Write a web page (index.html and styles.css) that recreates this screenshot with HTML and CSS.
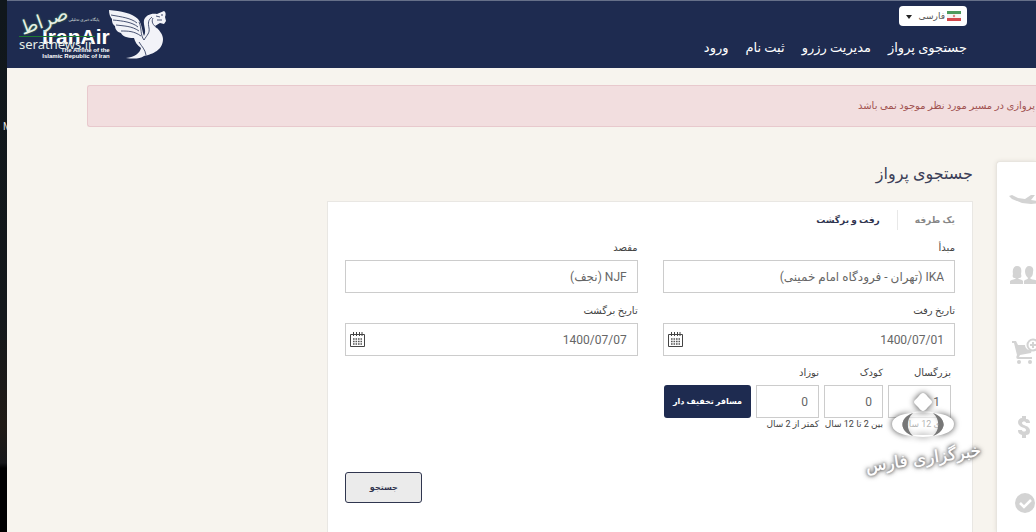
FILE: index.html
```html
<!DOCTYPE html>
<html lang="fa" dir="rtl">
<head>
<meta charset="utf-8">
<title>جستجوی پرواز</title>
<link rel="stylesheet" href="styles.css">
</head>
<body>
<div class="app">
  <header class="header">
    <div class="header-menu">
      <div class="language">
        <svg class="flag" viewBox="0 0 14 10"><path fill="#4d9a5c" d="M0 0h14v3H0z"/><path fill="#f5f5f2" d="M0 3h14v4H0z"/><path fill="#d3484b" d="M0 7h14v3H0z"/><circle cx="7" cy="5" r="1.2" fill="#d98a80"/></svg>
        <select class="language-select" aria-label="زبان"><option>فارسی</option></select>
        <svg class="caret" viewBox="0 0 6 4"><path d="M0 0h6L3 4z" fill="#222"/></svg>
      </div>
      <nav class="nav">
        <a href="#">جستجوی پرواز</a>
        <a href="#">مدیریت رزرو</a>
        <a href="#">ثبت نام</a>
        <a href="#">ورود</a>
      </nav>
    </div>
    <div class="brand" dir="ltr">
      <div class="brand-text">
        <strong class="brand-name">IranAir</strong>
        <span>The Airline of the</span>
        <span>Islamic Republic of Iran</span>
      </div>
      <svg class="homa" viewBox="0 0 58 50">
        <path fill="#f2f3f8" d="M0 0C12 1 23 3 29 9C33 14 33 21 35 26C38 21 34 15 35 10C37 5 42 3 48 4L55 1C57 2 57 5 56 7L57 11L55 14L51 13L46 16C50 20 54 24 54 29C54 40 44 44 35 46C31 49 24 49 17 48C26 47 31 43 32 38C28 35 26 32 25 28C18 28 13 26 12 23C8 22 6 19 6 16C3 14 3 11 3 9C1 7 0 4 0 0Z"/>
        <g fill="none" stroke="#1e2b50" stroke-width=".8"><path d="M2 5C13 7 22 8 28 13M4 10C14 11 23 12 29 17M7 15C15 16 23 16 30 21M12 21C19 21 25 21 32 26M30 12C33 18 31 25 35 30C38 25 41 23 40 18C39 13 39 10 43 7"/><path d="M37 45C36 39 33 37 30 32M44 8C42 12 44 15 48 18M47 6L51 7M48 10L53 10"/></g>
        <circle cx="53" cy="5" r=".8" fill="#1e2b50"/>
      </svg>
    </div>
  </header>

  <div class="alert" role="alert">پروازی در مسیر مورد نظر موجود نمی باشد</div>

  <main class="layout">
    <aside class="steps">
      <svg class="step" viewBox="0 0 30 30"><path d="M0 11L3 10L9 13L16 14L22 10L26 10L22 15L30 16V18L22 19L13 18L3 14Z"/></svg>
      <svg class="step" viewBox="0 0 30 30"><path d="M1 23V20C3 18 6 19 7 17C4 17 3 16 4 13C3 8 5 5 8 5C12 5 13 8 12 13C13 16 12 17 9 17C10 19 13 18 14 20V23ZM15 23V20C16 18 19 19 19 17C17 15 16 13 16 10C16 7 18 5 20 5C23 5 25 7 24 11C24 14 23 16 21 17C22 19 26 18 28 20V23Z"/></svg>
      <svg class="step" viewBox="0 0 30 30"><path d="M3 4H7L9 8H16C16 11 19 14 23 13L22 16L11 18L10 20H23V22H9C7 22 7 20 8 18L5 6H3Z"/><circle cx="10" cy="25" r="2"/><circle cx="21" cy="25" r="2"/><circle cx="24" cy="8" r="5.500" fill="none" stroke="#d3d3d3" stroke-width="2"/><path d="M23 5h2v2h2v2h-2v2h-2V9h-2V7h2z"/></svg>
      <svg class="step" viewBox="0 0 30 30"><path d="M13 3h4v3c3 0 4 2 4 4h-4c0-2-4-2-4 0 0 3 8 2 8 8 0 3-2 4-4 4v3h-4v-3c-3-1-4-2-4-5h4c0 2 4 2 4 0 0-3-8-2-8-8 0-2 2-4 4-4z"/></svg>
      <svg class="step" viewBox="0 0 30 30"><circle cx="16" cy="14" r="10"/><path d="M11 14l4 4 7-7" fill="none" stroke="#fff" stroke-width="2.500"/></svg>
    </aside>

    <section class="search">
      <h1 class="title">جستجوی پرواز</h1>
      <form class="card">
        <div class="tabs">
          <button type="button" class="tab">یک طرفه</button>
          <button type="button" class="tab tab-active">رفت و برگشت</button>
        </div>
        <div class="fields">
          <div class="field"><label for="from">مبدأ</label><input id="from" type="text" value="IKA (تهران - فرودگاه امام خمینی)"></div>
          <div class="field"><label for="to">مقصد</label><input id="to" type="text" value="NJF (نجف)"></div>
          <div class="field"><label for="depart">تاریخ رفت</label>
            <div class="date"><input id="depart" type="text" value="1400/07/01">
              <svg class="calendar" viewBox="0 0 15 15"><path d="M.5 2.500h14v12H.5zM3.500 0v4M6.500 0v4M9.500 0v4M12 0v4" fill="none" stroke="#444"/><path d="M3 7h9M3 9.500h9M3 12h9" stroke="#555" stroke-width="1.500" stroke-dasharray="1.600 .9"/></svg></div></div>
          <div class="field"><label for="return">تاریخ برگشت</label>
            <div class="date"><input id="return" type="text" value="1400/07/07">
              <svg class="calendar" viewBox="0 0 15 15"><path d="M.5 2.500h14v12H.5zM3.500 0v4M6.500 0v4M9.500 0v4M12 0v4" fill="none" stroke="#444"/><path d="M3 7h9M3 9.500h9M3 12h9" stroke="#555" stroke-width="1.500" stroke-dasharray="1.600 .9"/></svg></div></div>
        </div>
        <div class="passengers">
          <div class="field count"><label for="adult">بزرگسال</label><input id="adult" type="text" value="1"><small>بالای 12 سال</small></div>
          <div class="field count count-child"><label for="child">کودک</label><input id="child" type="text" value="0"><small>بین 2 تا 12 سال</small></div>
          <div class="field count"><label for="infant">نوزاد</label><input id="infant" type="text" value="0"><small>کمتر از 2 سال</small></div>
          <button type="button" class="discount">مسافر تخفیف دار</button>
        </div>
        <button type="submit" class="submit">جستجو</button>
      </form>
    </section>
  </main>
</div>
<div class="edge"><span>M</span></div>

<div class="serat">
  <div class="serat-top"><span class="serat-tag">پایگاه خبری تحلیلی</span><span class="serat-name">صراط</span></div>
  <span class="serat-url" dir="ltr">seratnews.ir</span>
</div>
<div class="fars">
  <svg class="fars-mark" viewBox="0 0 64 46">
    <ellipse cx="32" cy="31" rx="19" ry="12" fill="#fff" fill-opacity=".6"/>
    <path class="fars-ring" fill="#fff" d="M22 20C8 21 1 25 1 31C1 38 9 42 22 43C8 38 8 25 22 20ZM42 20C56 21 63 25 63 31C63 38 55 42 42 43C56 38 56 25 42 20ZM20 20Q32 16 44 20Q32 19 20 20ZM20 42Q32 42 44 42Q32 46 20 42Z"/>
    <path fill="#777" d="M22 20C8 25 8 38 22 43C15 37 15 26 22 20ZM42 20C56 25 56 38 42 43C49 37 49 26 42 20Z"/>
    <path class="fars-ring" fill="#fff" d="M32 0Q34 0 37 4L40 7Q42 9 40 11L37 14Q34 18 32 18Q30 18 27 14L24 11Q22 9 24 7L27 4Q30 0 32 0Z"/>
  </svg>
  <span class="fars-name">خبرگزاری فارس</span>
</div>
</body>
</html>
```
FILE: styles.css
```css
* { box-sizing: border-box; }
body {
  margin: 0;
  height: 100vh;
  display: flex;
  position: relative;
  overflow: hidden;
  background: #f7f4ee;
  color: #444;
  font-family: Roboto, "DejaVu Sans", sans-serif;
  font-size: 10px;
}
input, button, select { font: inherit; color: inherit; margin: 0; }
.app { flex: 1; min-width: 0; display: flex; flex-direction: column; }
.edge {
  width: 7px;
  padding-top: 120px;
  overflow: hidden;
  direction: ltr;
  background: linear-gradient(#10171c 0, #14181b 60%, #211b16 80%, #17181a 87%, #000 88%);
  color: #ddd;
  font-size: 10px;
  line-height: 14px;
}
.edge span { margin-left: 3px; }

.header {
  flex: none;
  display: flex;
  justify-content: space-between;
  height: 68px;
  padding: 5px 69px 0 35px;
  background: #1e2b50;
  border-top: 1px solid #667089;
}
.language { position: relative; width: 68px; }
.language-select {
  display: block;
  width: 100%;
  height: 20px;
  padding: 0 22px 0 0;
  border: 0;
  border-radius: 4px;
  background: #fff;
  color: #555;
  font-size: 9px;
  appearance: none;
}
.flag { position: absolute; top: 5px; right: 6px; width: 14px; height: 10px; }
.caret { position: absolute; top: 9px; left: 7px; width: 6px; height: 4px; }
.nav { display: flex; gap: 17px; margin-top: 10px; }
.nav a {
  color: #fff;
  font-size: 13px;
  font-weight: 500;
  line-height: 24px;
  text-decoration: none;
  white-space: nowrap;
}
.brand { display: flex; align-items: flex-start; }
.brand-text {
  display: flex;
  flex-direction: column;
  align-items: flex-end;
  padding-top: 20px;
  color: #fff;
  font-family: "Liberation Sans", sans-serif;
  font-size: 6px;
  font-weight: bold;
  line-height: 6px;
}
.brand-name { font-size: 21px; line-height: 21px; }
.homa { width: 58px; height: 50px; margin: 4px 0 0 -1px; }

.alert {
  flex: none;
  margin: 17px 0 0 80px;
  padding-right: 1px;
  border: 1px solid #e8c9cd;
  border-right: 0;
  border-radius: 3px 0 0 3px;
  background: #f2dedf;
  color: #a15250;
  line-height: 40px;
}

.layout {
  flex: 1;
  display: grid;
  grid-template-columns: 40px 2fr 1fr;
  column-gap: 23px;
  margin-top: 34px;
}
.steps {
  display: flex;
  flex-direction: column;
  gap: 46px;
  padding: 23px 0 0 12px;
  overflow: hidden;
  background: #fff;
  border-left: 1px solid #e8e5df;
  border-top: 1px solid #e8e5df;
  border-radius: 4px 0 0 0;
  box-shadow: 0 0 4px #e2ded6;
  direction: ltr;
}
.step { flex: none; width: 30px; height: 30px; fill: #d3d3d3; }
.search { display: flex; flex-direction: column; margin-left: -17px; }
.title { margin: 0; color: #3c3f58; font-size: 16px; font-weight: 400; line-height: 26px; }
.card {
  flex: 1;
  margin-top: 14px;
  padding: 8px 17px;
  background: #fff;
  border: 1px solid #e9e7e3;
  border-bottom: 0;
}
.tabs { display: flex; }
.tab { height: 20px; padding: 0; border: 0; background: none; color: #888; font-size: 9px; font-weight: bold; }
.tab-active { margin-right: 17px; padding-right: 17px; border-right: 1px solid #e8e8e8; color: #30344f; }
.fields { display: grid; grid-template-columns: 1fr 1fr; gap: 8px 25px; margin-top: 8px; }
.field { display: flex; flex-direction: column; }
.field label { height: 22px; line-height: 20px; }
.field input {
  width: 100%;
  height: 33px;
  padding: 0 10px;
  border: 1px solid #ccc;
  background: #fff;
  color: #666;
  font-size: 12px;
}
.date { position: relative; }
.calendar { position: absolute; left: 5px; top: 9px; width: 15px; height: 15px; }
.passengers { display: flex; gap: 5px; margin-top: 7px; padding-right: 4px; }
.count { width: 63px; }
.count-child { width: 59px; }
.count small { font-size: 9px; line-height: 12px; white-space: nowrap; }
.discount {
  align-self: flex-start;
  width: 87px;
  height: 33px;
  margin-top: 22px;
  padding: 0;
  border: 0;
  border-radius: 3px;
  background: #1e2b50;
  color: #fff;
  font-size: 8px;
  font-weight: bold;
}
.submit {
  display: block;
  width: 77px;
  height: 31px;
  margin: 42px auto 0 0;
  padding: 0;
  border: 1px solid #30364f;
  border-radius: 3px;
  background: #ebebeb;
  color: #30344f;
  font-size: 8px;
  font-weight: bold;
}

.serat { position: absolute; left: 19px; top: 3px; width: 76px; color: #e6eee6; }
.serat-top {
  display: flex;
  align-items: center;
  justify-content: flex-end;
  height: 34px;
  border-bottom: 1px solid #1c7a30;
}
.serat-name { font-family: "DejaVu Sans", sans-serif; font-size: 19px; transform: rotate(-20deg); text-shadow: 0 0 2px #4c9c58; }
.serat-tag { font-size: 4px; white-space: nowrap; }
.serat-url { display: block; font-family: "Noto Sans", sans-serif; font-size: 13px; line-height: 14px; }
.fars {
  position: absolute;
  right: 56px;
  top: 393px;
  display: flex;
  flex-direction: column;
  align-items: center;
  width: 114px;
  color: #fff;
}
.fars-mark { width: 64px; height: 46px; overflow: visible; }
.fars-ring { filter: drop-shadow(0 0 3px #444); }
.fars-name {
  font-family: "DejaVu Sans", sans-serif;
  font-size: 17px;
  line-height: 38px;
  white-space: nowrap;
  transform: rotate(-8deg);
  text-shadow: 0 0 1px #fff, 0 0 3px #444, 0 0 4px #666, 0 0 6px #888;
}
```
